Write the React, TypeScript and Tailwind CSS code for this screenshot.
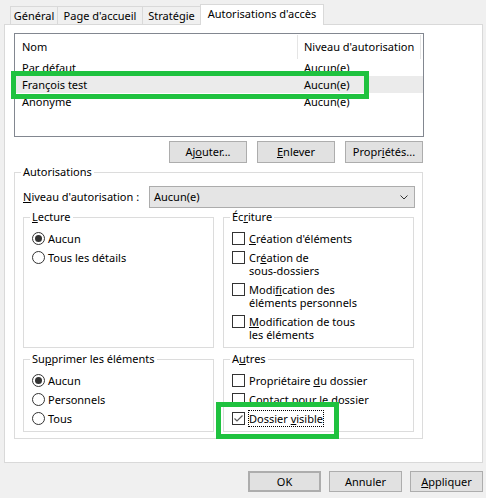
import React from "react";

function Radio({ checked, children }: { checked?: boolean; children: React.ReactNode }) {
  return (
    <div className="flex items-start gap-[3px] py-[3px] leading-[13px]">
      <span className="flex h-[13px] w-[13px] shrink-0 items-center justify-center rounded-full border border-[#333] bg-white">
        {checked && <span className="h-[7px] w-[7px] rounded-full bg-[#333]" />}
      </span>
      <span>{children}</span>
    </div>
  );
}

function Check({ checked, children }: { checked?: boolean; children: React.ReactNode }) {
  return (
    <div className="flex items-start gap-[4px] py-[3px] leading-[13px]">
      <span className="flex h-[13px] w-[13px] shrink-0 items-center justify-center border border-[#333] bg-white">
        {checked && (
          <svg width="11" height="11" viewBox="0 0 11 11">
            <path d="M1.5 5.5 L4 8 L9.5 2.5" fill="none" stroke="#5a5a5a" strokeWidth="1.2" />
          </svg>
        )}
      </span>
      <span>{children}</span>
    </div>
  );
}

function Group({ title, className, children }: { title: React.ReactNode; className: string; children: React.ReactNode }) {
  return (
    <fieldset className={`border border-[#dcdcdc] pl-[8px] ${className}`}>
      <legend className="-ml-[2px] px-[2px] leading-[16px]">{title}</legend>
      {children}
    </fieldset>
  );
}

function Button({ children, className = "" }: { children: React.ReactNode; className?: string }) {
  return (
    <div className={`flex items-center justify-center border border-[#adadad] bg-[#e1e1e1] ${className}`}>
      <span>{children}</span>
    </div>
  );
}

export default function App() {
  const tabs = [
    { label: "Général", w: "w-[47px]" },
    { label: "Page d'accueil", w: "w-[85px]" },
    { label: "Stratégie", w: "w-[58px]" },
  ];

  return (
    <div className="relative h-[498px] w-[486px] overflow-hidden whitespace-nowrap bg-[#f0f0f0] text-[11px] leading-[16px] text-black [font-family:'Noto_Sans',sans-serif]">
      {/* tabs */}
      <div className="flex h-[24px] items-end pl-[10px]">
        {tabs.map((t) => (
          <div
            key={t.label}
            className={`flex h-[18px] items-center justify-center border-l border-t border-[#d9d9d9] ${t.w}`}
          >
            {t.label}
          </div>
        ))}
        <div className="relative z-10 -mb-px flex h-[21px] w-[124px] items-start justify-center border-x border-t border-[#d9d9d9] bg-white pt-[1px]">
          Autorisations d'accès
        </div>
      </div>

      {/* panel */}
      <div className="ml-[4px] h-[439px] w-[479px] border border-[#d9d9d9] bg-white pl-[9px] pt-[8px]">
        <div className="h-[104px] w-[410px] border border-[#828790] bg-white">
          <div className="flex h-[25px] items-center">
            <div className="w-[282px] pl-[7px]">Nom</div>
            <div className="h-[24px] w-px bg-[#e5e5e5]" />
            <div className="w-[122px] pl-[6px]">Niveau d'autorisation</div>
            <div className="h-[24px] w-px bg-[#e5e5e5]" />
          </div>
          {[
            ["Par défaut", false],
            ["François test", true],
            ["Anonyme", false],
          ].map(([name, sel]) => (
            <div
              key={name as string}
              className={`flex h-[17px] items-center ${sel ? "bg-[#ebebeb]" : ""}`}
            >
              <div className="w-[283px] pl-[7px]">{name}</div>
              <div className="pl-[6px]">Aucun(e)</div>
            </div>
          ))}
        </div>

        <div className="mt-[4px] flex w-[409px] justify-end gap-[10px]">
          <Button className="h-[22px] w-[78px]">
            Aj<u>o</u>uter...
          </Button>
          <Button className="h-[22px] w-[78px]">
            <u>E</u>nlever
          </Button>
          <Button className="h-[22px] w-[78px]">
            Propr<u>i</u>étés...
          </Button>
        </div>

        <Group title="Autorisations" className="mt-[1px] w-[409px] pb-[6px]">
          <div className="mt-[6px] flex h-[22px] items-center">
            <div className="w-[126px]">
              <u>N</u>iveau d'autorisation :
            </div>
            <div className="flex h-[22px] w-[266px] items-center justify-between border border-[#acacac] bg-[#e5e5e5] pl-[4px] pr-[6px]">
              <span>Aucun(e)</span>
              <svg width="8" height="5" viewBox="0 0 8 5">
                <path d="M0.5 0.5 L4 4 L7.5 0.5" fill="none" stroke="#333" strokeWidth="1" />
              </svg>
            </div>
          </div>

          <div className="mt-[1px] grid grid-cols-[191px_191px] gap-x-[9px] gap-y-[3px]">
            <Group title={<><u>L</u>ecture</>} className="h-[139px] pt-[4px]">
              <Radio checked>Aucun</Radio>
              <Radio>Tous les détails</Radio>
            </Group>
            <Group title={<>Éc<u>r</u>iture</>} className="h-[139px] pt-[4px]">
              <Check>
                <u>C</u>réation d'éléments
              </Check>
              <Check>
                Cr<u>é</u>ation de
                <br />
                sous-dossiers
              </Check>
              <Check>
                Modi<u>f</u>ication des
                <br />
                éléments personnels
              </Check>
              <Check>
                <u>M</u>odification de tous
                <br />
                les éléments
              </Check>
            </Group>
            <Group title={<>Su<u>p</u>primer les éléments</>} className="h-[81px] pt-[4px]">
              <Radio checked>Aucun</Radio>
              <Radio>Personnels</Radio>
              <Radio>Tous</Radio>
            </Group>
            <Group title={<>A<u>u</u>tres</>} className="h-[81px] pt-[4px]">
              <Check>
                Propriétaire <u>d</u>u dossier
              </Check>
              <Check>Contact pour le dossier</Check>
              <Check checked>
                <span className="outline-1 outline-dotted outline-black">
                  Dossier <u>v</u>isible
                </span>
              </Check>
            </Group>
          </div>
        </Group>
      </div>

      {/* dialog buttons */}
      <div className="mt-[8px] flex justify-end gap-[8px] pr-[3px]">
        <Button className="h-[21px] w-[73px] border-2 border-[#0078d7]">OK</Button>
        <Button className="h-[21px] w-[73px]">Annuler</Button>
        <Button className="h-[21px] w-[73px]">
          <u>A</u>ppliquer
        </Button>
      </div>

      {/* highlight annotations */}
      <div className="absolute left-[11px] top-[71px] h-[28px] w-[358px] border-[5px] border-[#1fc23f]" />
      <div className="absolute left-[216px] top-[402px] h-[37px] w-[123px] border-[5px] border-[#1fc23f]" />
    </div>
  );
}
